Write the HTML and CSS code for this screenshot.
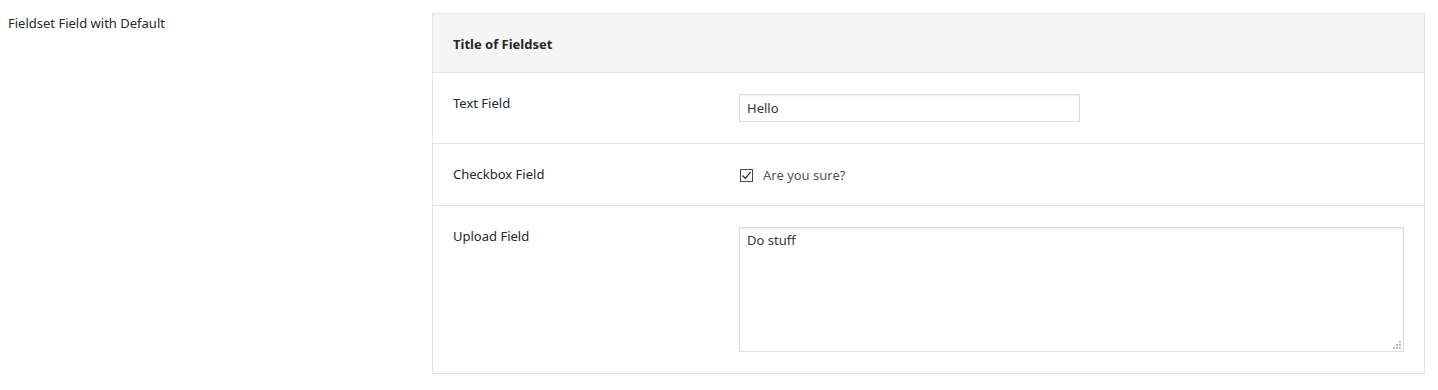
FILE: index.html
```html
<!DOCTYPE html>
<html lang="en">
<head>
    <meta charset="UTF-8">
    <meta name="viewport" content="width=device-width, initial-scale=1.0">
    <title>Fieldset Field</title>
    <link rel="stylesheet" href="styles.css">
</head>
<body>
    <div class="form-row">
        <div class="form-label">Fieldset Field with Default</div>

        <div class="fieldset">
            <div class="fieldset-title">Title of Fieldset</div>

            <div class="fieldset-row">
                <label class="row-label" for="textField">Text Field</label>
                <div class="row-control">
                    <input type="text" id="textField" class="text-input" value="Hello">
                </div>
            </div>

            <div class="fieldset-row">
                <div class="row-label">Checkbox Field</div>
                <div class="row-control">
                    <label class="checkbox">
                        <span class="checkbox-box">
                            <svg width="11" height="11" viewBox="0 0 11 11">
                                <path d="M1.5 5.5 L4.3 8.4 L9.6 2.2" fill="none" stroke="#2b2b2b" stroke-width="1.3"/>
                            </svg>
                        </span>
                        <span class="checkbox-text">Are you sure?</span>
                    </label>
                </div>
            </div>

            <div class="fieldset-row">
                <label class="row-label" for="uploadField">Upload Field</label>
                <div class="row-control">
                    <div class="textarea-wrap">
                        <textarea id="uploadField" class="textarea">Do stuff</textarea>
                        <svg class="grip" width="8" height="8" viewBox="0 0 8 8">
                            <rect x="6" y="0" width="2" height="2" fill="#bdbdbd"/>
                            <rect x="3" y="3" width="2" height="2" fill="#bdbdbd"/>
                            <rect x="6" y="3" width="2" height="2" fill="#bdbdbd"/>
                            <rect x="0" y="6" width="2" height="2" fill="#bdbdbd"/>
                            <rect x="3" y="6" width="2" height="2" fill="#bdbdbd"/>
                            <rect x="6" y="6" width="2" height="2" fill="#bdbdbd"/>
                        </svg>
                    </div>
                </div>
            </div>
        </div>
    </div>
</body>
</html>
```

FILE: styles.css
```css
:root {
    --text-color: #23282d;
    --border-color: #e5e5e5;
    --input-border: #dddddd;
    --header-bg: #f5f5f5;
}

* {
    margin: 0;
    padding: 0;
    box-sizing: border-box;
}

body {
    font-family: 'Noto Sans', 'Open Sans', sans-serif;
    font-size: 13px;
    line-height: 20px;
    color: var(--text-color);
    background-color: #ffffff;
}

.form-row {
    display: grid;
    grid-template-columns: 424px 993px;
    padding: 13px 0 0 8px;
}

.form-label {
    line-height: 20px;
}

.fieldset {
    border: 1px solid var(--border-color);
    background-color: #ffffff;
}

.fieldset-title {
    background-color: var(--header-bg);
    border-bottom: 1px solid var(--border-color);
    padding: 20px 20px 18px;
    font-weight: 700;
}

.fieldset-row {
    display: grid;
    grid-template-columns: 286px 1fr;
    padding: 20px 20px;
    border-bottom: 1px solid var(--border-color);
}

.fieldset-row:last-child {
    border-bottom: none;
}

.row-label {
    display: block;
}

.text-input {
    display: block;
    margin: 1px 0;
    width: 341px;
    height: 28px;
    padding: 0 7px;
    border: 1px solid var(--input-border);
    box-shadow: inset 0 1px 2px rgba(0, 0, 0, 0.07);
    font-family: inherit;
    font-size: 13px;
    color: #32373c;
    outline: none;
}

.checkbox {
    display: flex;
    align-items: center;
    height: 21px;
    gap: 10px;
    padding-left: 1px;
}

.checkbox-box {
    display: flex;
    align-items: center;
    justify-content: center;
    width: 13px;
    height: 13px;
    border: 1px solid #4a4a4a;
    background-color: #ffffff;
    margin-top: 1px;
}

.checkbox-text {
    color: #555555;
}

.textarea-wrap {
    position: relative;
    margin: 1px 0;
    width: 665px;
    height: 125px;
}

.textarea {
    display: block;
    width: 100%;
    height: 100%;
    padding: 2px 7px;
    border: 1px solid var(--input-border);
    box-shadow: inset 0 1px 2px rgba(0, 0, 0, 0.07);
    font-family: inherit;
    font-size: 13px;
    line-height: 20px;
    color: #32373c;
    resize: none;
    outline: none;
}

.grip {
    position: absolute;
    right: 3px;
    bottom: 3px;
}
```
